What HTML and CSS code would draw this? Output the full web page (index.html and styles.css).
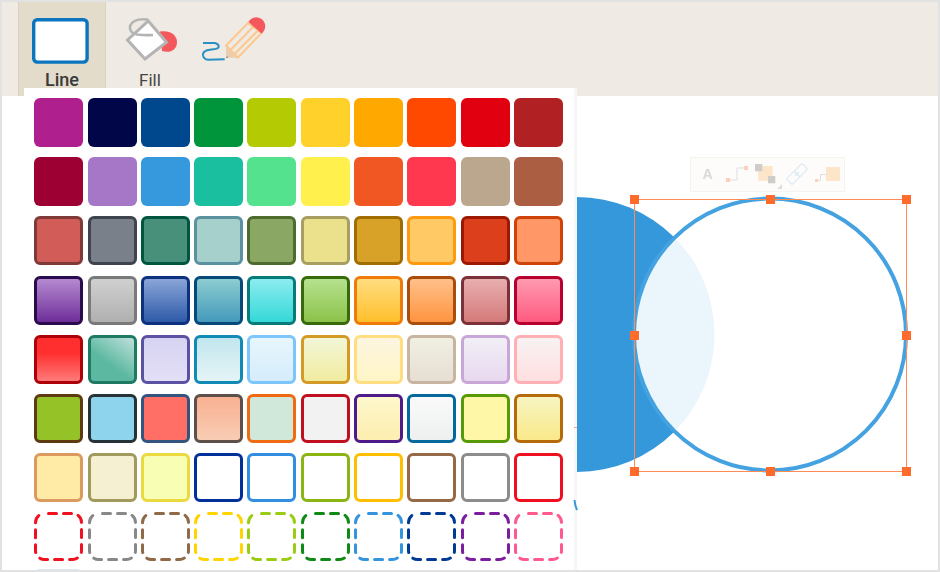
FILE: index.html
```html
<!DOCTYPE html>
<html lang="en">
<head>
  <meta charset="UTF-8">
  <title>Line and Fill</title>
  <link rel="stylesheet" href="styles.css">
</head>
<body>
  <div class="app">

    <!-- Toolbar -->
    <div class="toolbar">
      <div class="tool tool-active">
        <svg class="tool-icon" viewBox="18 8 88 62">
          <rect x="33.7" y="19.7" width="53.4" height="42.4" rx="3.5" fill="#fff" stroke="#0b76bf" stroke-width="3.4"/>
        </svg>
        <span class="tool-label">Line</span>
      </div>
      <div class="tool">
        <svg class="tool-icon" viewBox="106 8 88 62">
          <path d="M160 31.5C170 30 177 35 177 42C177 50 170 53.500 162 51Z" fill="#f4575c"/>
          <path d="M148.300 21L166.500 42.300L145 59L127.500 40Z" fill="#fff" stroke="#b4b4b4" stroke-width="3"/>
          <path d="M148 19.500Q133 18 130 26Q129 33 137 34.500Q145 35.500 153 35" fill="none" stroke="#b4b4b4" stroke-width="2.600"/>
        </svg>
        <span class="tool-label">Fill</span>
      </div>
      <div class="tool">
        <svg class="tool-icon" viewBox="194 8 88 62">
          <path d="M203 43H214.700Q219 44 218.700 47Q218 49 213 49.300L207 50.300Q202.500 52 203 55.500Q204 59.500 208 59.700L224.700 59.300" fill="none" stroke="#2a90c4" stroke-width="2"/>
          <path d="M226 46L226 57.500L238 58Z" fill="#e8cfb4"/>
          <path d="M226 57.500l1.500-1.500v2z" fill="#6b5a4a"/>
          <path d="M226 45.500L248 23L261.500 33L238 57.500Z" fill="none" stroke="#fcc88e" stroke-width="2"/>
          <path d="M231 49.500L253 27M235 53.500L257.500 31" fill="none" stroke="#fcc88e" stroke-width="2"/>
          <path d="M248.500 22A8.900 8.900 0 1 1 261.500 33.500Z" fill="#f4575c"/>
        </svg>
      </div>
    </div>

    <!-- Colour palette -->
    <div class="palette">
      <div class="swatches">
        <div class="swatch a1"></div><div class="swatch a2"></div><div class="swatch a3"></div><div class="swatch a4"></div><div class="swatch a5"></div><div class="swatch a6"></div><div class="swatch a7"></div><div class="swatch a8"></div><div class="swatch a9"></div><div class="swatch a10"></div>
        <div class="swatch b1"></div><div class="swatch b2"></div><div class="swatch b3"></div><div class="swatch b4"></div><div class="swatch b5"></div><div class="swatch b6"></div><div class="swatch b7"></div><div class="swatch b8"></div><div class="swatch b9"></div><div class="swatch b10"></div>
        <div class="swatch c1"></div><div class="swatch c2"></div><div class="swatch c3"></div><div class="swatch c4"></div><div class="swatch c5"></div><div class="swatch c6"></div><div class="swatch c7"></div><div class="swatch c8"></div><div class="swatch c9"></div><div class="swatch c10"></div>
        <div class="swatch d1"></div><div class="swatch d2"></div><div class="swatch d3"></div><div class="swatch d4"></div><div class="swatch d5"></div><div class="swatch d6"></div><div class="swatch d7"></div><div class="swatch d8"></div><div class="swatch d9"></div><div class="swatch d10"></div>
        <div class="swatch e1"></div><div class="swatch e2"></div><div class="swatch e3"></div><div class="swatch e4"></div><div class="swatch e5"></div><div class="swatch e6"></div><div class="swatch e7"></div><div class="swatch e8"></div><div class="swatch e9"></div><div class="swatch e10"></div>
        <div class="swatch f1"></div><div class="swatch f2"></div><div class="swatch f3"></div><div class="swatch f4"></div><div class="swatch f5"></div><div class="swatch f6"></div><div class="swatch f7"></div><div class="swatch f8"></div><div class="swatch f9"></div><div class="swatch f10"></div>
        <div class="swatch g1"></div><div class="swatch g2"></div><div class="swatch g3"></div><div class="swatch g4"></div><div class="swatch g5"></div><div class="swatch g6"></div><div class="swatch g7"></div><div class="swatch g8"></div><div class="swatch g9"></div><div class="swatch g10"></div>
        <svg class="dashed h1" viewBox="0 0 49 49"><rect x="1.500" y="1.500" width="46" height="46" rx="9"/></svg>
        <svg class="dashed h2" viewBox="0 0 49 49"><rect x="1.500" y="1.500" width="46" height="46" rx="9"/></svg>
        <svg class="dashed h3" viewBox="0 0 49 49"><rect x="1.500" y="1.500" width="46" height="46" rx="9"/></svg>
        <svg class="dashed h4" viewBox="0 0 49 49"><rect x="1.500" y="1.500" width="46" height="46" rx="9"/></svg>
        <svg class="dashed h5" viewBox="0 0 49 49"><rect x="1.500" y="1.500" width="46" height="46" rx="9"/></svg>
        <svg class="dashed h6" viewBox="0 0 49 49"><rect x="1.500" y="1.500" width="46" height="46" rx="9"/></svg>
        <svg class="dashed h7" viewBox="0 0 49 49"><rect x="1.500" y="1.500" width="46" height="46" rx="9"/></svg>
        <svg class="dashed h8" viewBox="0 0 49 49"><rect x="1.500" y="1.500" width="46" height="46" rx="9"/></svg>
        <svg class="dashed h9" viewBox="0 0 49 49"><rect x="1.500" y="1.500" width="46" height="46" rx="9"/></svg>
        <svg class="dashed h10" viewBox="0 0 49 49"><rect x="1.500" y="1.500" width="46" height="46" rx="9"/></svg>
        <div class="swatch i1"></div>
      </div>
    </div>

    <!-- Drawing canvas: coordinates in the viewBox are page pixels -->
    <div class="canvas">
      <svg class="drawing" viewBox="2 96 936 474">
        <path d="M577 197A137.500 137.500 0 0 1 577 472Z" fill="#3498db"/>
        <circle cx="770" cy="334.500" r="136" fill="#fff" fill-opacity="0.9" stroke="#45a2e0" stroke-width="4"/>

        <!-- bits of hidden shapes next to the palette -->
        <path d="M574 427.500H577" stroke="#fda384" stroke-width="1" fill="none"/>
        <path d="M574.500 500Q575 506 577 510" stroke="#3498db" stroke-width="2" fill="none"/>

        <!-- selection box -->
        <rect x="634.500" y="199.500" width="272" height="272" fill="none" stroke="#ff8a55" stroke-width="1"/>
        <g fill="#ff6b2b">
          <rect x="630" y="195" width="9" height="9"/>
          <rect x="766" y="195" width="9" height="9"/>
          <rect x="902" y="195" width="9" height="9"/>
          <rect x="630" y="331" width="9" height="9"/>
          <rect x="902" y="331" width="9" height="9"/>
          <rect x="630" y="467" width="9" height="9"/>
          <rect x="766" y="467" width="9" height="9"/>
          <rect x="902" y="467" width="9" height="9"/>
        </g>

        <!-- floating mini toolbar -->
        <rect x="690.500" y="157.500" width="154" height="34" fill="#fdfcfa" stroke="#f5f3ee" stroke-width="1"/>
        <text x="707.500" y="179" class="mini-a" text-anchor="middle">A</text>
        <path d="M728 180H737V168H746" fill="none" stroke="#dfdfdf" stroke-width="1"/>
        <rect x="726" y="178" width="4" height="4" fill="#fbd0bd"/>
        <rect x="744" y="166" width="4" height="4" fill="#fbd0bd"/>
        <rect x="758.300" y="166" width="14.400" height="14.700" fill="#fce5c9"/>
        <rect x="755" y="164" width="7.300" height="7.300" fill="#cfcdc9"/>
        <rect x="768" y="176" width="7.300" height="7.300" fill="#cfcdc9"/>
        <path d="M777 189L782 189L782 184Z" fill="#dedede"/>
        <g transform="rotate(-45 797 174)" fill="none" stroke="#d6e7f2" stroke-width="1">
          <rect x="786" y="170" width="11" height="8" rx="1"/>
          <rect x="797" y="170" width="11" height="8" rx="1"/>
          <path d="M794 174H800"/>
        </g>
        <path d="M817 180.500H820.500V174.500H826" fill="none" stroke="#dfdfdf" stroke-width="1"/>
        <rect x="815" y="179" width="3" height="3" fill="#fbd0bd"/>
        <rect x="826" y="167" width="14" height="14" fill="#fce5c9"/>
      </svg>
    </div>
  </div>
</body>
</html>
```

FILE: styles.css
```css
/* ====== RESET ====== */
html, body {
  margin: 0;
  padding: 0;
}

body {
  background-color: white;
  font-family: Roboto, 'Liberation Sans', sans-serif;
  overflow: hidden;
}

.app {
  position: relative;
  display: flex;
  flex-direction: column;
  box-sizing: border-box;
  width: 940px;
  height: 572px;
  border: 2px solid #e2e2e2;
  overflow: hidden;
}

/* ====== TOOLBAR ====== */
.toolbar {
  display: flex;
  flex: none;
  height: 94px;
  padding-left: 16px;
  background-color: #efeae3;
}

.tool {
  display: flex;
  flex-direction: column;
  align-items: center;
  box-sizing: border-box;
  width: 88px;
  padding-top: 6px;
}

.tool-active {
  background-color: #e3dccb;
  box-shadow: inset -1px 0 0 #dcd3bf, inset 1px 0 0 #dcd3bf;
}

.tool-icon {
  display: block;
  width: 88px;
  height: 62px;
}

.tool-label {
  font-size: 17px;
  line-height: 20px;
  color: #454545;
}

.tool-active .tool-label {
  font-size: 18px;
  font-weight: 500;
  color: #3a3a3a;
}

/* ====== CANVAS ====== */
.canvas {
  flex: 1;
  background-color: white;
}

.drawing {
  position: absolute;
  left: 0;
  top: 94px;
  z-index: 2;
  display: block;
  width: 936px;
  height: 474px;
}

.mini-a {
  font-family: 'Liberation Sans', sans-serif;
  font-size: 14px;
  font-weight: bold;
  fill: #d9d9d9;
}

/* ====== PALETTE ====== */
.palette {
  position: absolute;
  left: 22px;
  top: 86px;
  bottom: 0;
  z-index: 1;
  box-sizing: border-box;
  width: 553px;
  padding: 10.3px 0 0 10.3px;
  background-color: white;
  border-right: 3px solid #f6f6f6;
  overflow: hidden;
}

.swatches {
  display: grid;
  grid-template-columns: repeat(10, 49px);
  grid-auto-rows: 49px;
  column-gap: 4.3px;
  row-gap: 10.1px;
}

.swatch {
  box-sizing: border-box;
  border: 3px solid transparent;
  border-radius: 6px;
  background-clip: border-box;
}

.dashed {
  display: block;
  width: 49px;
  height: 49px;
}

.dashed rect {
  fill: none;
  stroke-width: 3px;
  stroke-dasharray: 8 7;
  stroke-dashoffset: -4;
  stroke-linecap: round;
}

/* Row 1 and 2: solid */
.a1 { background-color: #b01f8e; }
.a2 { background-color: #000647; }
.a3 { background-color: #00488d; }
.a4 { background-color: #00953b; }
.a5 { background-color: #b4ca03; }
.a6 { background-color: #ffd12a; }
.a7 { background-color: #ffa800; }
.a8 { background-color: #ff4800; }
.a9 { background-color: #e1000f; }
.a10 { background-color: #b12023; }

.b1 { background-color: #9d0033; }
.b2 { background-color: #a677c6; }
.b3 { background-color: #3699dd; }
.b4 { background-color: #1abf9f; }
.b5 { background-color: #54e28f; }
.b6 { background-color: #fff04d; }
.b7 { background-color: #f15723; }
.b8 { background-color: #ff374f; }
.b9 { background-color: #baa78e; }
.b10 { background-color: #ab5e42; }

/* Row 3: solid with a dark edge */
.c1 { background-color: #d25d58; border-color: #7f3a38; }
.c2 { background-color: #7a808a; border-color: #3f434d; }
.c3 { background-color: #48907a; border-color: #00563f; }
.c4 { background-color: #a6d0cb; border-color: #5a92a0; }
.c5 { background-color: #8aa763; border-color: #4e6b2e; }
.c6 { background-color: #ebe08b; border-color: #a89e62; }
.c7 { background-color: #d8a127; border-color: #a06d00; }
.c8 { background-color: #ffc965; border-color: #ff9a10; }
.c9 { background-color: #dc3f1b; border-color: #9c1800; }
.c10 { background-color: #ff9766; border-color: #cf4208; }

/* Row 4: glossy */
.d1 { background-image: linear-gradient(#b58ad0, #6f2e9a); border-color: #2a0b4d; }
.d2 { background-image: linear-gradient(#d0d0d0, #b0b0b0); border-color: #7a7a7a; }
.d3 { background-image: linear-gradient(#8aa5d8, #2e5aa8); border-color: #0b317f; }
.d4 { background-image: linear-gradient(#8ccdd0, #4499bb); border-color: #074a7a; }
.d5 { background-image: linear-gradient(#8cecef, #35d8d8); border-color: #077a7a; }
.d6 { background-image: linear-gradient(#b5e28e, #8cc24a); border-color: #376b0a; }
.d7 { background-image: linear-gradient(#ffdd80, #ffbf2b); border-color: #f07a0a; }
.d8 { background-image: linear-gradient(#ffc08a, #ff9440); border-color: #a84e0a; }
.d9 { background-image: linear-gradient(#e8aeae, #d57a7a); border-color: #7c3038; }
.d10 { background-image: linear-gradient(#ff9ab0, #ff5a80); border-color: #b8002f; }

/* Row 5: pale gradients */
.e1 { background-image: linear-gradient(#ff2f2f 35%, #ff7a7a); border-color: #ae0008; }
.e2 { background-image: linear-gradient(35deg, #5cb8a0 40%, #bfe0dc); border-color: #1f7a64; }
.e3 { background-image: linear-gradient(#d6d3f2, #e3dff6); border-color: #5c52a3; }
.e4 { background-image: linear-gradient(#c2e6ee, #e4f4f6); border-color: #118ab5; }
.e5 { background-image: linear-gradient(#e8f6fc, #d4ecfc); border-color: #7cc6fb; }
.e6 { background-image: linear-gradient(#f2f6d8, #f2ec9f); border-color: #d49a26; }
.e7 { background-image: linear-gradient(#fdf6e0, #fff5c6); border-color: #ffdd80; }
.e8 { background-image: linear-gradient(#f0f0e2, #e6ded2); border-color: #c8b4a0; }
.e9 { background-image: linear-gradient(#f1eff6, #e8d8ef); border-color: #c9a6d8; }
.e10 { background-image: linear-gradient(#f8f2f3, #ffdfe0); border-color: #ffb0b5; }

/* Row 6 */
.f1 { background-color: #95c327; border-color: #5e3a10; }
.f2 { background-color: #8dd4ec; border-color: #263235; }
.f3 { background-color: #ff6f66; border-color: #345480; }
.f4 { background-image: linear-gradient(#f9b092, #f8cdb4); border-color: #5d4f4a; }
.f5 { background-color: #cfe8da; border-color: #ef6a12; }
.f6 { background-color: #f2f2f2; border-color: #c01020; }
.f7 { background-image: linear-gradient(#fdf7cb, #fdeeb0); border-color: #4f1a8a; }
.f8 { background-image: linear-gradient(#f9f9f9, #eef0f0); border-color: #05699e; }
.f9 { background-color: #fff7a8; border-color: #579a05; }
.f10 { background-image: linear-gradient(#f6f4c0, #fae98a); border-color: #b76a0a; }

/* Row 7: mostly outlines */
.g1 { background-color: #ffeaa6; border-color: #dc9a5e; }
.g2 { background-color: #f5f0d2; border-color: #a09a5c; }
.g3 { background-color: #f9feb5; border-color: #ecd940; }
.g4 { border-color: #00309a; }
.g5 { border-color: #318ee0; }
.g6 { border-color: #8ab512; }
.g7 { border-color: #ffbf00; }
.g8 { border-color: #966a46; }
.g9 { border-color: #8c8c8c; }
.g10 { border-color: #ee1020; }

/* Row 8: dashed outlines */
.h1 rect { stroke: #f01020; }
.h2 rect { stroke: #888888; }
.h3 rect { stroke: #906a46; }
.h4 rect { stroke: #ffd400; }
.h5 rect { stroke: #9acc14; }
.h6 rect { stroke: #0f8a16; }
.h7 rect { stroke: #3394e0; }
.h8 rect { stroke: #003a94; }
.h9 rect { stroke: #7a1e9e; }
.h10 rect { stroke: #ff5a8e; }

/* Row 9 is cut off by the window */
.i1 {
  margin-top: -2px;
  background-color: #d8e8f4;
}
```
